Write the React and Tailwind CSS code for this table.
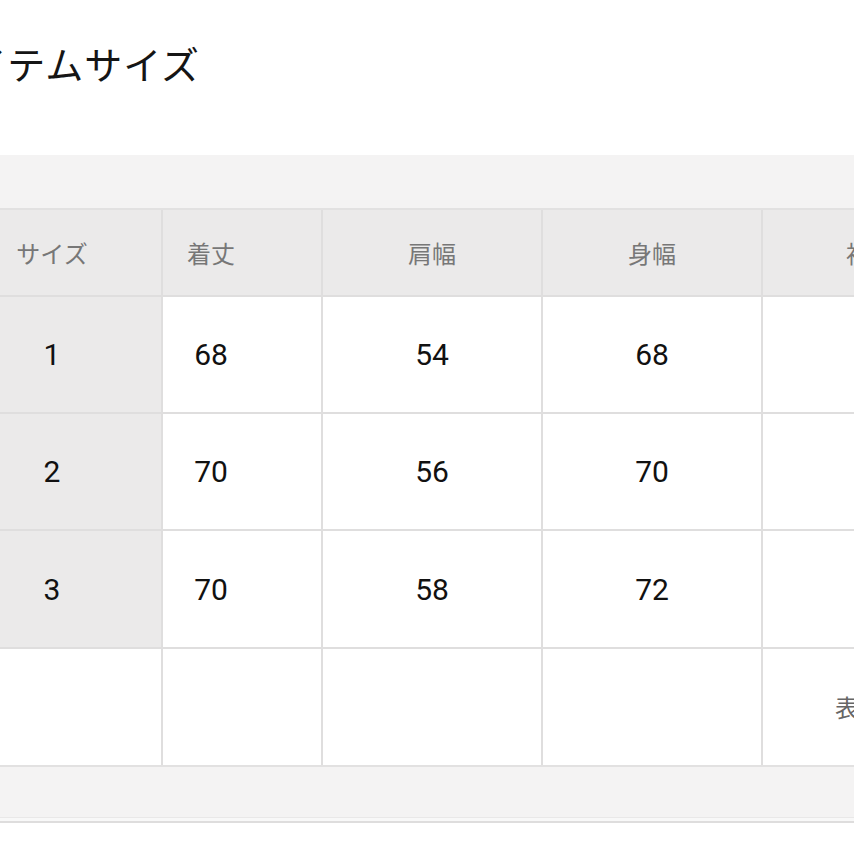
import React from 'react';

const rows = [
  { size: '1', length: '68', shoulder: '54', body: '68' },
  { size: '2', length: '70', shoulder: '56', body: '70' },
  { size: '3', length: '70', shoulder: '58', body: '72' },
];

const jp = { fontFamily: '"Noto Sans CJK JP", "Noto Sans", sans-serif' };
const num = { fontFamily: 'Roboto, "Noto Sans", sans-serif' };

function App() {
  return (
    <div className="w-[854px] h-[854px] overflow-hidden bg-white" style={jp}>
      {/* title */}
      <div className="h-[155px] pt-[38px]">
        <h2 className="ml-[-68px] text-[38px] leading-[50px] text-[#151515] tracking-[1px] whitespace-nowrap">
          アイテムサイズ
        </h2>
      </div>

      {/* top band */}
      <div className="h-[53px] bg-[#f4f3f3]" />
      <div className="h-[2px] bg-[#e2e1e1]" />

      {/* table */}
      <div className="ml-[-57px] w-[1200px] bg-[#dfdede] grid grid-cols-[218px_158px_218px_218px_218px_218px] grid-rows-[85px_115px_115px_116px_116px] gap-[2px]">
        <div className="bg-[#ebeaea] flex items-center justify-center text-[24px] text-[#777]">サイズ</div>
        <div className="bg-[#ebeaea] flex items-center">
          <div className="w-[96px] text-center text-[24px] text-[#777]">着丈</div>
        </div>
        <div className="bg-[#ebeaea] flex items-center justify-center text-[24px] text-[#777]">肩幅</div>
        <div className="bg-[#ebeaea] flex items-center justify-center text-[24px] text-[#777]">身幅</div>
        <div className="bg-[#ebeaea] flex items-center pl-[83px] text-[24px] text-[#777] whitespace-nowrap">袖丈</div>
        <div className="bg-[#ebeaea]" />

        {rows.map((r) => (
          <React.Fragment key={r.size}>
            <div className="bg-[#ebeaea] flex items-center justify-center text-[30px] text-[#111]" style={num}>{r.size}</div>
            <div className="bg-white flex items-center">
              <div className="w-[96px] text-center text-[30px] text-[#111]" style={num}>{r.length}</div>
            </div>
            <div className="bg-white flex items-center justify-center text-[30px] text-[#111]" style={num}>{r.shoulder}</div>
            <div className="bg-white flex items-center justify-center text-[30px] text-[#111]" style={num}>{r.body}</div>
            <div className="bg-white" />
            <div className="bg-white" />
          </React.Fragment>
        ))}

        <div className="bg-white" />
        <div className="bg-white" />
        <div className="bg-white" />
        <div className="bg-white" />
        <div className="bg-white flex items-center pl-[72px] text-[24px] text-[#666] whitespace-nowrap">表記なし</div>
        <div className="bg-white" />
      </div>

      {/* bottom band */}
      <div className="h-[2px] bg-[#e2e1e1]" />
      <div className="h-[50px] bg-[#f4f3f3]" />
      <div className="h-[1px] bg-[#e9e8e8]" />
      <div className="h-[3px] bg-[#f8f8f8]" />
      <div className="h-[2px] bg-[#dedddd]" />
    </div>
  );
}

export default App;
